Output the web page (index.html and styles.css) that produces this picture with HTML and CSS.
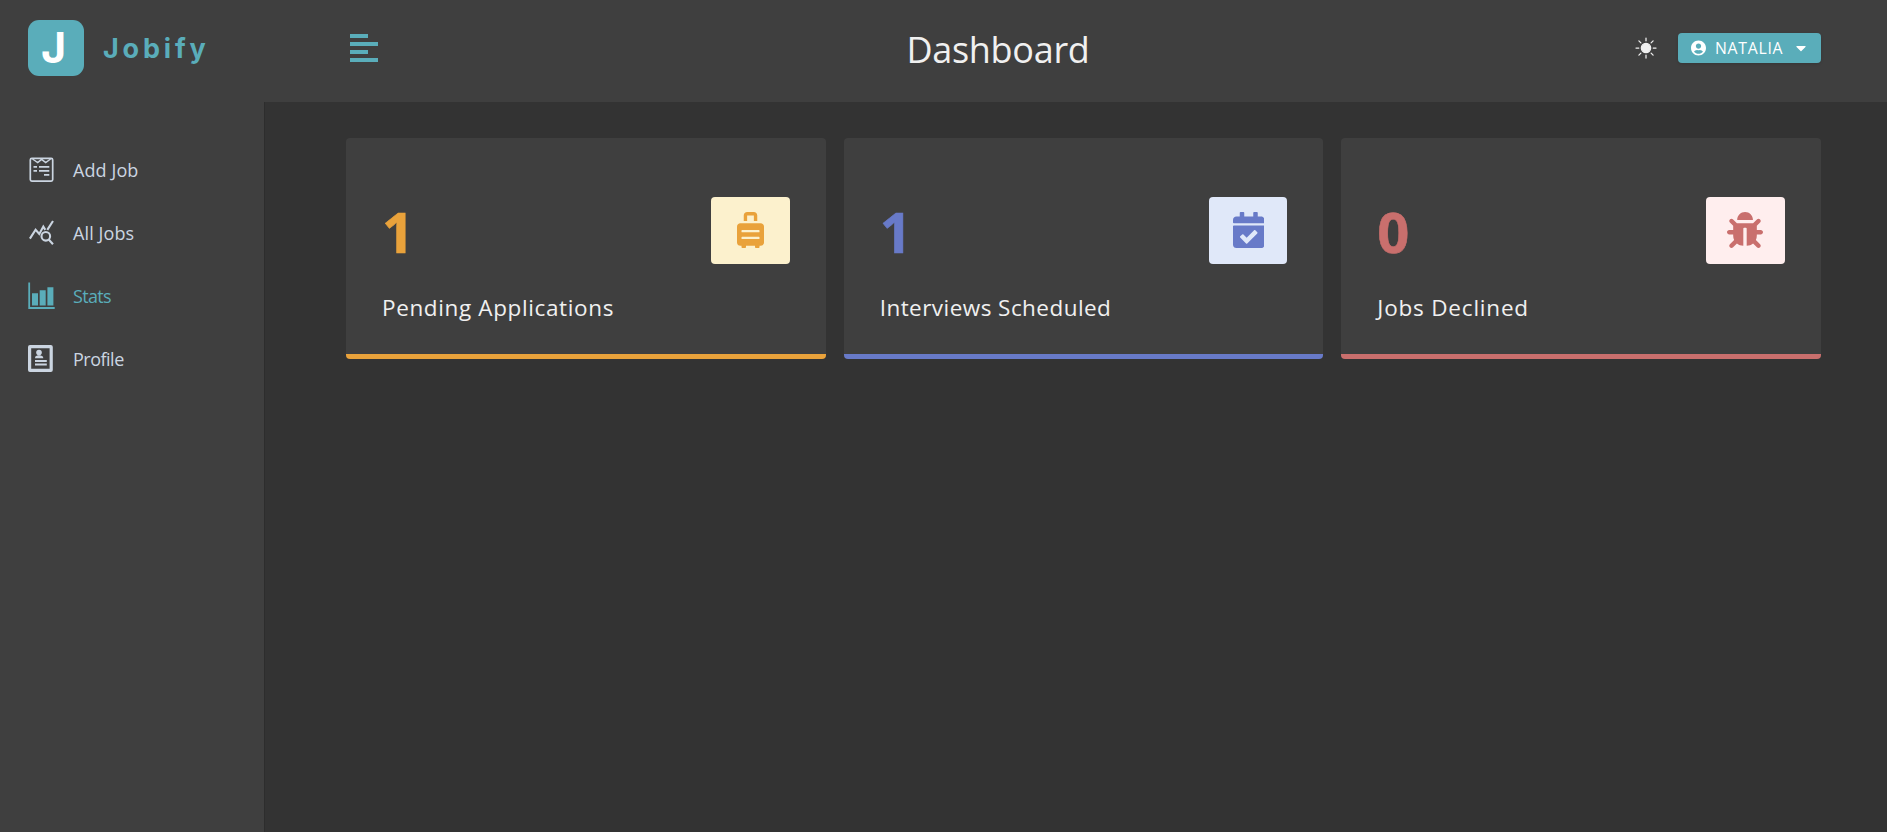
FILE: index.html
```html
<!DOCTYPE html>
<html lang="en">
<head>
<meta charset="utf-8">
<title>Jobify</title>
<link rel="stylesheet" href="styles.css">
</head>
<body>
<div class="dashboard">
  <aside class="sidebar">
    <div class="logo"><span class="logo-mark">J</span><span class="logo-text">Jobify</span></div>
    <nav class="nav-links">
      <a class="nav-link"><svg class="nav-icon" viewBox="0 0 28 28" fill="none" stroke="currentColor" stroke-width="1.7"><rect x="3.300" y="2.400" width="22.400" height="22.700" rx="1.500"/><path d="M5.500 3l5.200 3.500L14.600 3.300l4.100 3.200L23.600 3" stroke-width="1.500"/><path d="M6.500 10.800H10M12 10.800h10.300M6.500 14.800H10M12 14.800h10.300M17 18.800h5.300"/></svg><span>Add Job</span></a>
      <a class="nav-link"><svg class="nav-icon" viewBox="0 0 28 28" fill="none" stroke="currentColor" stroke-width="2.100"><path d="M2.900 19.600L8.600 10.700l3.700 4.200 4-7.300 2 3.300M20.300 10.900L26 2"/><circle cx="18.800" cy="17.300" r="4.300"/><path d="M21.700 20.500l4.300 4.700"/></svg><span>All Jobs</span></a>
      <a class="nav-link active stats-link"><svg class="nav-icon" viewBox="0 0 28 28" fill="currentColor"><path d="M1.300 .4h1.800v24.700H27.700V27H1.300zM5 11.200h6v12.300H5zM12.700 8.200h6v15.300h-6zM20.400 5.200h6v18.300h-6z"/></svg><span>Stats</span></a>
      <a class="nav-link profile-link"><svg class="nav-icon" viewBox="0 0 28 28" fill="currentColor"><path fill-rule="evenodd" d="M3 0h20.800a2 2 0 0 1 2 2v23a2 2 0 0 1-2 2H3a2 2 0 0 1-2-2V2a2 2 0 0 1 2-2zM4.200 3.200v20.600h18.400V3.200z"/><circle cx="12" cy="7.600" r="2.800"/><path d="M8 13.200c0-2 1.500-2.900 4-2.900s4.300.9 4.300 2.900zM8 15h11.800v1.900H8zM8 18.600h11.800v1.900H8z"/></svg><span>Profile</span></a>
    </nav>
  </aside>
  <div class="content">
    <header class="navbar">
      <svg class="toggle" viewBox="0 0 28 28" fill="currentColor"><path d="M0 0h18v4H0zM0 8h28v4H0zM0 16h18v4H0zM0 24h28v4H0z"/></svg>
      <h1 class="title">Dashboard</h1>
      <div class="actions">
        <svg class="sun" viewBox="0 0 22 22" stroke="currentColor" stroke-width="1.250" stroke-linecap="round"><circle cx="11" cy="11" r="4.700" fill="currentColor"/><path d="M11 1v2.800M11 18.200V21M1 11h2.800M18.200 11H21M3.900 3.900l2 2M16.100 16.100l2 2M3.900 18.100l2-2M16.100 5.900l2-2"/></svg>
        <button class="user">
          <svg class="user-icon" viewBox="0 0 496 512" fill="currentColor"><path d="M248 8C111 8 0 119 0 256s111 248 248 248 248-111 248-248S385 8 248 8zm0 96c48.600 0 88 39.400 88 88s-39.400 88-88 88-88-39.400-88-88 39.400-88 88-88zm0 344c-58.700 0-111.300-26.600-146.500-68.200 18.800-35.400 55.600-59.800 98.500-59.800 2.400 0 4.800.4 7.100 1.100 13 4.200 26.600 6.900 40.900 6.900 14.300 0 28-2.700 40.900-6.900 2.300-.7 4.700-1.100 7.100-1.100 42.900 0 79.700 24.400 98.500 59.800C359.300 421.400 306.700 448 248 448z"/></svg>
          <span class="user-name">NATALIA</span>
          <svg class="caret" viewBox="0 0 320 512" fill="currentColor"><path d="M31.300 192h257.300c17.800 0 26.700 21.500 14.100 34.100L174.100 354.800c-7.800 7.800-20.500 7.800-28.300 0L17.200 226.100C4.600 213.500 13.500 192 31.300 192z"/></svg>
        </button>
      </div>
    </header>
    <main class="stats">
      <article class="card pending">
        <div class="card-top"><span class="count">1</span><span class="icon-box"><svg class="icon" viewBox="0 0 384 512" fill="currentColor"><path d="M336 160H48c-26.510 0-48 21.490-48 48v224c0 26.510 21.490 48 48 48h16v16c0 8.840 7.160 16 16 16h32c8.840 0 16-7.160 16-16v-16h128v16c0 8.840 7.160 16 16 16h32c8.840 0 16-7.160 16-16v-16h16c26.510 0 48-21.490 48-48V208c0-26.510-21.490-48-48-48zm-16 216c0 4.420-3.580 8-8 8H72c-4.420 0-8-3.580-8-8v-16c0-4.420 3.580-8 8-8h240c4.420 0 8 3.580 8 8v16zm0-96c0 4.420-3.580 8-8 8H72c-4.420 0-8-3.580-8-8v-16c0-4.420 3.580-8 8-8h240c4.420 0 8 3.580 8 8v16zM144 48h96v80h48V48c0-26.510-21.490-48-48-48h-96c-26.510 0-48 21.490-48 48v80h48V48z"/></svg></span></div>
        <h2 class="label">Pending Applications</h2>
      </article>
      <article class="card interviews">
        <div class="card-top"><span class="count">1</span><span class="icon-box"><svg class="icon" viewBox="0 0 448 512" fill="currentColor"><path d="M436 160H12c-6.627 0-12-5.373-12-12v-36c0-26.510 21.490-48 48-48h48V12c0-6.627 5.373-12 12-12h40c6.627 0 12 5.373 12 12v52h128V12c0-6.627 5.373-12 12-12h40c6.627 0 12 5.373 12 12v52h48c26.510 0 48 21.490 48 48v36c0 6.627-5.373 12-12 12zM12 192h424c6.627 0 12 5.373 12 12v260c0 26.510-21.490 48-48 48H48c-26.510 0-48-21.490-48-48V204c0-6.627 5.373-12 12-12zm333.296 95.947l-28.169-28.398c-4.667-4.705-12.265-4.736-16.970-.068L194.120 364.665l-45.980-46.352c-4.667-4.705-12.266-4.736-16.971-.068l-28.397 28.170c-4.705 4.667-4.736 12.265-.068 16.970l82.601 83.269c4.667 4.705 12.265 4.736 16.970.068l142.953-141.805c4.705-4.667 4.736-12.265.068-16.970z"/></svg></span></div>
        <h2 class="label">Interviews Scheduled</h2>
      </article>
      <article class="card declined">
        <div class="card-top"><span class="count">0</span><span class="icon-box"><svg class="icon" viewBox="0 0 512 512" fill="currentColor"><path d="M511.988 288.900c-.478 17.430-15.217 31.100-32.653 31.100H424v16c0 21.864-4.882 42.584-13.600 61.145l60.228 60.228c12.496 12.497 12.496 32.758 0 45.255-12.498 12.497-32.759 12.496-45.256 0l-54.736-54.736C345.886 467.965 314.351 480 280 480V236c0-6.627-5.373-12-12-12h-24c-6.627 0-12 5.373-12 12v244c-34.351 0-65.886-12.035-90.636-32.108l-54.736 54.736c-12.498 12.497-32.759 12.496-45.256 0-12.496-12.497-12.496-32.758 0-45.255l60.228-60.228C92.882 378.584 88 357.864 88 336v-16H32.666C15.230 320 .491 306.330.013 288.900-.484 270.816 14.028 256 32 256h56v-58.745l-46.628-46.628c-12.496-12.497-12.496-32.758 0-45.255 12.498-12.497 32.758-12.497 45.256 0L141.255 160h229.489l54.627-54.627c12.498-12.497 32.758-12.497 45.256 0 12.496 12.497 12.496 32.758 0 45.255L424 197.255V256h56c17.972 0 32.484 14.816 31.988 32.900zM257 0c-61.856 0-112 50.144-112 112h224C369 50.144 318.856 0 257 0z"/></svg></span></div>
        <h2 class="label">Jobs Declined</h2>
      </article>
    </main>
  </div>
</div>
</body>
</html>
```
FILE: styles.css
```css
* { box-sizing: border-box; margin: 0; }
body { background: #333; color: #f0f0f0; font-family: "Open Sans", "Noto Sans", sans-serif; font-size: 18px; }
svg { display: block; flex: none; }
.dashboard { display: grid; grid-template-columns: 264px 1fr; min-height: 100vh; }
.sidebar { background: #3f3f3f; box-shadow: 1px 0 0 rgba(0, 0, 0, .1); }
.logo { display: flex; align-items: center; gap: 19px; height: 96px; padding-left: 28px; font-family: Inter, sans-serif; font-weight: 700; }
.logo-mark { width: 56px; height: 56px; padding-right: 5px; border-radius: 11px; background: #5aadba; color: #fff; font-size: 43px; line-height: 54px; text-align: center; }
.logo-text { padding-top: 2px; color: #5aadba; font-size: 27px; line-height: 36px; letter-spacing: 3.8px; }
.nav-links { padding-top: 42px; }
.nav-link { display: flex; align-items: center; gap: 18px; height: 63px; padding-left: 27px; color: #cbd5e1; font-size: 18px; letter-spacing: .1px; }
.nav-link.active { color: #5aadba; }
.nav-link.stats-link { letter-spacing: -.7px; }
.nav-link.profile-link { letter-spacing: -.5px; }
.nav-icon { width: 28px; height: 28px; }
.navbar { display: flex; justify-content: space-between; align-items: center; height: 102px; padding: 0 66px 6px 86px; background: #3f3f3f; }
.toggle { width: 28px; height: 28px; color: #5aadba; }
.title { font-size: 36px; font-weight: 400; line-height: 48px; letter-spacing: -.3px; padding-top: 4px; }
.actions { display: flex; align-items: center; justify-content: flex-end; gap: 21px; width: 203px; }
.sun { width: 22px; height: 22px; }
.user { display: flex; align-items: center; width: 143px; height: 30px; padding: 0 13px; border: 0; border-radius: 4px; background: #5aadba; color: #fff; font: 15.75px "Open Sans", sans-serif; box-shadow: 0 1px 3px rgba(0, 0, 0, .15); }
.user-icon { width: 15px; height: 16px; margin-right: 9px; }
.user-name { letter-spacing: .75px; }
.caret { width: 10px; height: 16px; margin-left: auto; margin-right: 2px; }
.stats { display: grid; grid-template-columns: repeat(3, 1fr); gap: 18px; padding: 36px 66px 0 82px; }
.card { height: 221px; padding: 59px 36px 0; border-bottom: 5px solid currentColor; border-radius: 4px; background: #3f3f3f; }
.card-top { display: flex; justify-content: space-between; height: 67px; }
.count { font-size: 56px; font-weight: 700; line-height: 68px; -webkit-text-stroke: .6px currentColor; }
.icon-box { display: flex; align-items: center; justify-content: center; width: 79px; height: 67px; padding-bottom: 1px; border-radius: 4px; }
.icon { height: 36px; }
.label { color: #f0f0f0; font-size: 22.5px; font-weight: 400; line-height: 30px; letter-spacing: .63px; margin-top: 29px; }
.pending { color: #e9a23b; }
.pending .icon-box { background: #fcf1cd; }
.interviews { color: #687ac8; }
.interviews .label { letter-spacing: .45px; }
.interviews .icon-box { width: 78px; background: #e0e8f9; }
.declined { color: #c96f6d; }
.declined .label { letter-spacing: .8px; }
.declined .icon-box { background: #ffeeee; }
```
